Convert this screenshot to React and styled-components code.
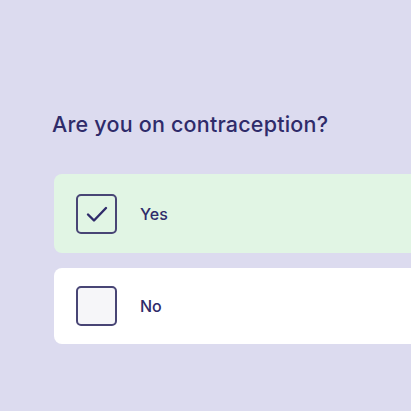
import React from 'react';
import styled, { createGlobalStyle } from 'styled-components';

const GlobalStyle = createGlobalStyle`
  html, body {
    margin: 0;
    padding: 0;
    background: #dcdbef;
    overflow: hidden;
  }
  * { box-sizing: border-box; }
`;

const Page = styled.div`
  width: 411px;
  height: 411px;
  padding: 111px 0 0 54px;
  font-family: Inter, "Noto Sans", sans-serif;
  color: #2f2b6a;
`;

const Question = styled.h1`
  margin: 0 0 36px -2px;
  font-size: 21.5px;
  font-weight: 500;
  line-height: 27px;
  letter-spacing: 0.2px;
`;

const Options = styled.div`
  display: flex;
  flex-direction: column;
  gap: 15px;
`;

const Option = styled.label`
  display: flex;
  align-items: center;
  gap: 23px;
  height: ${({ tall }) => (tall ? '79px' : '76px')};
  width: 100%;
  padding-left: 22px;
  border-radius: 8px 0 0 8px;
  background: ${({ checked }) => (checked ? '#e1f5e4' : '#ffffff')};
  cursor: pointer;
`;

const Box = styled.span`
  width: 41px;
  height: 40px;
  display: flex;
  align-items: center;
  justify-content: center;
  border: 2px solid #484575;
  border-radius: 5px;
  background: ${({ checked }) => (checked ? 'transparent' : '#f6f6f9')};
`;

const Label = styled.span`
  font-size: 16px;
  font-weight: 500;
`;

const Check = () => (
  <svg width="22" height="18" viewBox="0 0 22 18" fill="none">
    <path d="M2 9.5l6 6L20 3" stroke="#2f2b6a" strokeWidth="2.4" strokeLinecap="round" strokeLinejoin="round" />
  </svg>
);

const App = () => (
  <Page>
    <GlobalStyle />
    <Question>Are you on contraception?</Question>
    <Options>
      <Option checked tall>
        <Box checked>
          <Check />
        </Box>
        <Label>Yes</Label>
      </Option>
      <Option>
        <Box />
        <Label>No</Label>
      </Option>
    </Options>
  </Page>
);

export default App;
